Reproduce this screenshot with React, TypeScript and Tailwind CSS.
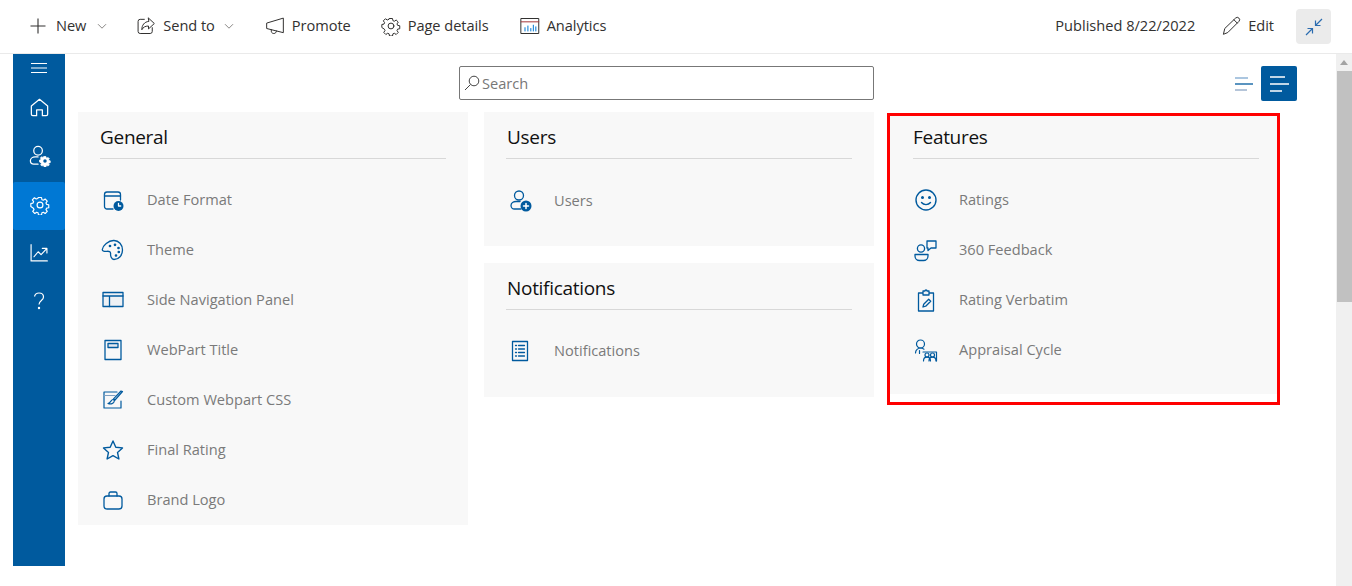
import React from "react";

const B = "#005a9e";
type P = { children: React.ReactNode; size?: number; color?: string; w?: number };
const Ic = ({ children, size = 24, color = B, w = 1.3 }: P) => (
  <svg width={size} height={size} viewBox="0 0 24 24" fill="none" stroke={color} strokeWidth={w} strokeLinecap="round" strokeLinejoin="round" className="shrink-0">
    {children}
  </svg>
);

const gearPath = "M10.2 3h3.6l.5 2.6 1.7.7 2.2-1.5 2.5 2.5-1.5 2.2.7 1.7 2.6.5v3.6l-2.6.5-.7 1.7 1.5 2.2-2.5 2.5-2.2-1.500-1.700.7-.5 2.600h-3.600l-.5-2.600-1.700-.7-2.200 1.500-2.500-2.500 1.500-2.200-.7-1.700L1 13.800v-3.600l2.600-.5.7-1.700-1.500-2.200 2.500-2.500 2.200 1.500 1.700-.7z";

const icons: Record<string, React.ReactNode> = {
  date: (
    <Ic>
      <path d="M12 21H6a2.500 2.500 0 0 1-2.500-2.500v-12A2.500 2.500 0 0 1 6 4h11a2.500 2.500 0 0 1 2.500 2.500V12" />
      <path d="M3.500 8h16" />
      <circle cx="17.500" cy="18" r="5" fill={B} stroke="none" />
      <path d="M17.500 15.500V18h2.200" stroke="#fff" />
    </Ic>
  ),
  theme: (
    <Ic>
      <path d="M12.500 2.500C7.500 2.500 1.800 7.500 1.300 11.500c-.2 1.800 2.200 2.200 4.700 1.800 2-.2 3.800.4 3.600 2.400-.2 2 .6 5.800 3.400 5.800 4.800 0 8.500-4.200 8.500-9.500 0-5.200-3.700-9.500-8.500-9.500z" />
      <circle cx="9" cy="8" r=".7" fill={B} />
      <circle cx="14" cy="6.800" r=".7" fill={B} />
      <circle cx="17.500" cy="10" r=".7" fill={B} />
      <circle cx="17.800" cy="14" r=".7" fill={B} />
      <circle cx="15" cy="17.500" r=".7" fill={B} />
    </Ic>
  ),
  side: (
    <Ic>
      <rect x="2" y="4.500" width="20" height="14" fill="#eef1f5" />
      <path d="M2 8h20M8.500 8v10.500" />
    </Ic>
  ),
  title: (
    <Ic>
      <rect x="4" y="2.500" width="16" height="19" />
      <rect x="7" y="5.500" width="10" height="4" fill="#e4e8ee" />
    </Ic>
  ),
  css: (
    <Ic w={1.2}>
      <path d="M20 13v7H3V4h13" />
      <path d="M3 7.500h11" stroke="#7f9fc0" />
      <path d="M21.500 3.500 14 12l-1.500-1.200L20 3z" />
      <path d="M12 11.500c-2 0-2 3-5 4 2.500 1 6 .5 6.500-3z" />
    </Ic>
  ),
  star: (
    <Ic w={1.4}>
      <path d="m12 3 2.800 6.200 6.700.7-5 4.500 1.400 6.600L12 17.600 6.100 21l1.400-6.600-5-4.500 6.700-.7z" />
    </Ic>
  ),
  logo: (
    <Ic>
      <rect x="3" y="8" width="18" height="13" rx="3" />
      <path d="M8 8V5.500A1.500 1.500 0 0 1 9.500 4h5A1.500 1.500 0 0 1 16 5.500V8" />
    </Ic>
  ),
  users: (
    <Ic>
      <circle cx="11" cy="7.500" r="4.500" />
      <path d="M13 21H6.500A3.500 3.500 0 0 1 3 17.500C3 15 5.500 13.500 8 13.500h4" />
      <circle cx="18" cy="18" r="5.500" fill={B} stroke="none" />
      <path d="M18 15.500v5M15.500 18h5" stroke="#fff" strokeWidth={1.5} />
    </Ic>
  ),
  notif: (
    <Ic>
      <rect x="4.500" y="2.500" width="15" height="19" />
      <path d="M7.500 6.500h1M10.500 6.500h6M7.500 10h1M10.500 10h6M7.500 13.500h1M10.500 13.500h6M7.500 17h1M10.500 17h6" />
    </Ic>
  ),
  ratings: (
    <Ic w={1.4}>
      <circle cx="12" cy="12" r="10" />
      <circle cx="8.500" cy="9.500" r=".8" fill={B} />
      <circle cx="15.500" cy="9.500" r=".8" fill={B} />
      <path d="M7.500 14.500c2.200 2.800 6.800 2.800 9 0" />
    </Ic>
  ),
  feedback: (
    <Ic>
      <circle cx="7" cy="10.500" r="3.600" />
      <path d="M1 16.500h13v1.500a4.500 4.500 0 0 1-4.500 4.500h-4A4.500 4.500 0 0 1 1 18z" />
      <path d="M13 3h9v7h-5l-3 2.500V10h-1z" />
    </Ic>
  ),
  verbatim: (
    <Ic>
      <rect x="4.500" y="5" width="15" height="18" />
      <path d="M9 5V3h2a1 1 0 0 1 2 0h2v4H9z" fill="#eef1f5" />
      <path d="m9 19 .7-2.800 5-5 2 2-5 5z" />
    </Ic>
  ),
  cycle: (
    <Ic w={1.2}>
      <circle cx="6.500" cy="6" r="4" />
      <path d="M1.500 15c0-3 2.500-5 5-5 1.500 0 2.500.5 3.500 1.200M5.500 12.500v3" />
      <path d="M9 14h13.500v9" />
      <circle cx="13" cy="17" r="2" />
      <circle cx="18.500" cy="17" r="2" />
      <path d="M9.500 23c0-2.500 1.500-3.800 3.500-3.800s3.500 1.300 3.500 3.800M15 23c0-2.500 1.500-3.800 3.500-3.800S22 20.500 22 23" />
    </Ic>
  ),
};

const Row = ({ icon, label, col, textClass }: { icon: string; label: string; col: string; textClass: string }) => (
  <div className="flex h-[50px] items-center">
    <div className={`flex shrink-0 justify-start ${col}`}>{icons[icon]}</div>
    <span className={`text-[14.6px] text-[#7a7a7a] ${textClass}`}>{label}</span>
  </div>
);

const Card = ({
  title,
  rows,
  className,
  col,
  head,
  textClass = "",
}: {
  title: string;
  rows: [string, string][];
  className: string;
  col: string;
  head: string;
  textClass?: string;
}) => (
  <section className={`bg-[#f8f8f8] ${className}`}>
    <h2 className={`flex items-center border-b border-[#d8d8d8] text-[19px] leading-none tracking-[-0.3px] text-[#111] ${head}`}>{title}</h2>
    <div className="pt-[16px]">
      {rows.map(([i, l]) => (
        <Row key={l} icon={i} label={l} col={col} textClass={textClass} />
      ))}
    </div>
  </section>
);

const Tool = ({ icon, label, chevron, gap }: { icon: React.ReactNode; label: string; chevron?: boolean; gap: string }) => (
  <div className={`flex items-center ${gap}`}>
    {icon}
    <span className="pb-[2px] text-[14.6px] tracking-[-0.05px] text-[#323130]">{label}</span>
    {chevron && (
      <svg width="10" height="10" viewBox="0 0 10 10" fill="none" stroke="#8a8886" strokeWidth="1" className="ml-[2px]">
        <path d="m1 3.200 4 4 4-4" />
      </svg>
    )}
  </div>
);

const D = "#323130";

export default function App() {
  return (
    <div className="flex h-[586px] w-[1352px] flex-col overflow-hidden bg-white font-['Open_Sans','Noto_Sans',sans-serif]">
      <header className="flex h-[54px] shrink-0 items-center justify-between border-b border-[#eaeaea] pl-[29px] pr-[21px]">
        <div className="flex items-center">
          <Tool
            chevron
            gap="gap-[9px]"
            icon={
              <svg width="18" height="18" viewBox="0 0 18 18" stroke={D} strokeWidth="1.100" fill="none">
                <path d="M9 1.500v15M1.500 9h15" />
              </svg>
            }
            label="New"
          />
          <div className="w-[29px]" />
          <Tool
            chevron
            gap="gap-[7px]"
            icon={
              <Ic size={20} color={D} w={1.2}>
                <path d="M10 4H5a2.500 2.500 0 0 0-2.500 2.500v12A2.500 2.500 0 0 0 5 21h12a2.500 2.500 0 0 0 2.500-2.500V14" />
                <path d="M15 2.500 22 9l-7 6.500V12c-4 0-6.500 1.500-8 4.500 0-5.500 3-9.500 8-10z" />
              </Ic>
            }
            label="Send to"
          />
          <div className="w-[31px]" />
          <Tool
            gap="gap-[7px]"
            icon={
              <Ic size={20} color={D} w={1.2}>
                <path d="M22 3v17L2 15V9z" />
                <path d="M7.500 16.500c-.5 3 1 4.500 3 4.500s3-1.200 3.300-3" />
              </Ic>
            }
            label="Promote"
          />
          <div className="w-[30px]" />
          <Tool
            gap="gap-[7px]"
            icon={
              <Ic size={20} color={D} w={1.2}>
                <path d={gearPath} />
                <circle cx="12" cy="12" r="3.500" />
              </Ic>
            }
            label="Page details"
          />
          <div className="w-[31px]" />
          <Tool
            gap="gap-[7px]"
            icon={
              <Ic size={20} color={D} w={1.2}>
                <rect x="1.500" y="3" width="21" height="18" />
                <path d="M1.500 7h21" stroke="#a4373a" />
                <path d="M6 18v-4M9.500 18v-6M13 18v-3M16 18v-7M19 18v-5" stroke="#0078d4" />
              </Ic>
            }
            label="Analytics"
          />
        </div>
        <div className="flex items-center">
          <span className="pb-[2px] text-[14.6px] text-[#323130]">Published 8/22/2022</span>
          <div className="w-[26px]" />
          <Tool
            gap="gap-[7px]"
            icon={
              <Ic size={20} color={D} w={1.2}>
                <path d="M3 21.500 4.500 15 17.500 2.500a2.500 2.500 0 0 1 4 4L8.500 19.500z" />
                <path d="m15.500 4.500 4 4" />
              </Ic>
            }
            label="Edit"
          />
          <div className="w-[22px]" />
          <button className="flex h-[35px] w-[35px] items-center justify-center rounded-[4px] bg-[#ebebeb]">
            <svg width="20" height="20" viewBox="0 0 20 20" fill="none" stroke="#2b6cb0" strokeWidth="1.200">
              <path d="M18 2l-6.500 6.500M11.500 3.500v5h5M2 18l6.500-6.500M3.500 11.500h5v5" />
            </svg>
          </button>
        </div>
      </header>

      <div className="flex min-h-0 flex-1">
        <nav className="ml-[13px] flex h-[512px] w-[52px] shrink-0 flex-col items-center bg-[#005a9e]">
          <div className="flex h-[30px] w-full items-center justify-center pb-[3px]">
            <svg width="16" height="12" viewBox="0 0 16 12" stroke="#fff" strokeWidth="1.200">
              <path d="M0 1.500h16M0 6h16M0 10.500h16" />
            </svg>
          </div>
          <div className="flex h-[48px] w-full items-center justify-center pb-[2px]">
            <Ic size={23} color="#fff" w={1.3}>
              <path d="M3.500 10.500 12 3.500l8.500 7V19a1.500 1.500 0 0 1-1.500 1.500h-4v-6h-6v6H5A1.500 1.500 0 0 1 3.500 19z" />
            </Ic>
          </div>
          <div className="flex h-[48px] w-full items-center justify-center pb-[2px]">
            <Ic size={23} color="#fff" w={1.3}>
              <circle cx="10.500" cy="7" r="4.500" />
              <path d="M10.500 21H6a3.500 3.500 0 0 1-3.500-3.500c0-2.500 2.500-4 5-4h3" />
              <g transform="translate(11.500 11.500) scale(.52)">
                <path d={gearPath} fill="#fff" stroke="#fff" strokeWidth="1.500" />
                <circle cx="12" cy="12" r="3.500" fill="#005a9e" stroke="none" />
              </g>
            </Ic>
          </div>
          <div className="mt-[2px] flex h-[48px] w-full items-center justify-center rounded-[2px] bg-[#0078d4] pb-[2px] pl-[2px]">
            <Ic size={20} color="#fff" w={1.4}>
              <path d={gearPath} />
              <circle cx="12" cy="12" r="3.500" />
            </Ic>
          </div>
          <div className="flex h-[48px] w-full items-center justify-center pb-[2px]">
            <Ic size={20} color="#fff" w={1.4}>
              <path d="M2.500 2v19.500H22" />
              <path d="m6 16.500 5-6 3.500 3.500L21 7M16 6.500h5.500V12" />
            </Ic>
          </div>
          <div className="flex h-[46px] w-full items-center justify-center">
            <svg width="12" height="18" viewBox="0 0 12 18" fill="none" stroke="#fff" strokeWidth="1.200">
              <path d="M1.500 4.500C2 2.300 3.700 1 6 1c2.600 0 4.500 1.700 4.500 4 0 3.500-4.500 3.500-4.500 7.500" />
              <circle cx="6" cy="16" r=".6" fill="#fff" />
            </svg>
          </div>
        </nav>

        <main className="flex min-w-0 flex-1 flex-col pl-[13px] pt-[12px]">
          <div className="flex h-[35px] w-[1219px] shrink-0 items-start justify-between pl-[381px]">
            <div className="flex h-[34px] w-[415px] items-center gap-[2px] rounded-[2px] border border-[#777] pl-[4px]">
              <svg width="16" height="16" viewBox="0 0 16 16" fill="none" stroke="#444" strokeWidth="1">
                <circle cx="10" cy="6" r="4.800" />
                <path d="M6.500 9.500 1 15" />
              </svg>
              <span className="pt-[2px] text-[14.6px] text-[#777]">Search</span>
            </div>
            <div className="flex items-center gap-[8px]">
              <svg width="18" height="14" viewBox="0 0 18 14" fill="none" strokeWidth="1.300">
                <path d="M0 1h13" stroke="#7da7cf" />
                <path d="M0 7h18" stroke={B} />
                <path d="M0 13h12" stroke="#8da6c5" />
              </svg>
              <div className="flex h-[35px] w-[36px] items-center justify-center rounded-[2px] bg-[#005a9e]">
                <svg width="19" height="16" viewBox="0 0 19 16" fill="none" stroke="#fff" strokeWidth="1.300">
                  <path d="M0 1h15M0 8h19M0 15h12" />
                </svg>
              </div>
            </div>
          </div>

          <div className="mt-[11px] flex items-start gap-[16px]">
            <Card
              title="General"
              col="w-[47px] pl-[1px]"
              head="h-[47px] pt-[4px]"
              className="h-[413px] w-[390px] shrink-0 px-[22px]"
              rows={[
                ["date", "Date Format"],
                ["theme", "Theme"],
                ["side", "Side Navigation Panel"],
                ["title", "WebPart Title"],
                ["css", "Custom Webpart CSS"],
                ["star", "Final Rating"],
                ["logo", "Brand Logo"],
              ]}
            />
            <div className="flex w-[390px] shrink-0 flex-col gap-[17px]">
              <Card title="Users" col="w-[48px] pl-[2px]" textClass="pt-[2px]" head="h-[47px] pt-[4px] pl-[1px]" className="h-[134px] px-[22px]" rows={[["users", "Users"]]} />
              <Card title="Notifications" col="w-[48px] pl-[2px]" head="h-[47px] pt-[4px] pl-[1px]" className="h-[134px] px-[22px]" rows={[["notif", "Notifications"]]} />
            </div>
            <div className="ml-[-3px] mt-[1px] w-[393px] shrink-0 border-[3px] border-[#ff0000] pb-[8px]">
              <Card
                title="Features"
                col="w-[46px] pl-[1px]"
                head="h-[43px]"
                className="h-[278px] pl-[23px] pr-[18px]"
                rows={[
                  ["ratings", "Ratings"],
                  ["feedback", "360 Feedback"],
                  ["verbatim", "Rating Verbatim"],
                  ["cycle", "Appraisal Cycle"],
                ]}
              />
            </div>
          </div>
        </main>

        <aside className="flex w-[16px] shrink-0 flex-col bg-[#f0f0f0]">
          <div className="flex h-[17px] items-center justify-center">
            <div className="h-0 w-0 border-x-[4px] border-b-[5px] border-x-transparent border-b-[#a3a3a3]" />
          </div>
          <div className="ml-[1px] h-[231px] bg-[#c1c1c1]" />
        </aside>
      </div>
    </div>
  );
}
